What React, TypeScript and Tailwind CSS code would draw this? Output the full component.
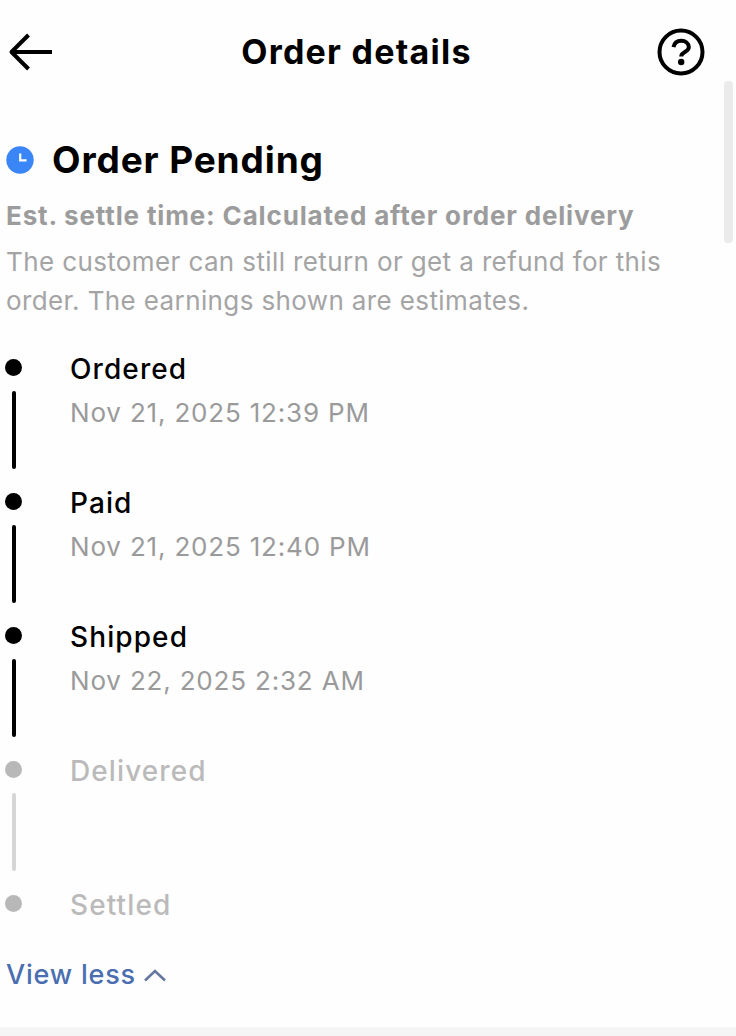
import React, {useState} from "react";

interface OrderStep {
    label: string;
    date?: string;
    done: boolean;
}

const steps: OrderStep[] = [
    {label: "Ordered", date: "Nov 21, 2025 12:39 PM", done: true},
    {label: "Paid", date: "Nov 21, 2025 12:40 PM", done: true},
    {label: "Shipped", date: "Nov 22, 2025 2:32 AM", done: true},
    {label: "Delivered", done: false},
    {label: "Settled", done: false},
];

const BackIcon = () => (
    <svg className="h-10 w-11" viewBox="0 0 44 40" fill="none" stroke="currentColor" strokeWidth="4" strokeLinejoin="round">
        <path d="M20.5 3 3.5 20l17 17M3.5 20H44"/>
    </svg>
);

const HelpIcon = () => (
    <svg className="h-12 w-12" viewBox="0 0 48 48" fill="none" stroke="currentColor" strokeWidth="4">
        <circle cx="24" cy="24" r="21.5"/>
        <path d="M16.5 19.2c.8-4.2 4-6.4 7.7-6.4 4.2 0 7.6 2.6 7.6 6.5 0 5.1-7.6 4.5-7.6 9.2"/>
        <circle cx="24.2" cy="34" r="3.2" fill="currentColor" stroke="none"/>
    </svg>
);

const ClockIcon = () => (
    <svg className="h-7 w-7" viewBox="0 0 28 28" fill="none">
        <circle cx="14" cy="14" r="13.7" fill="#3b86f6"/>
        <path d="M14.2 7.5v6.8h6.3" stroke="#fff" strokeWidth="2.2"/>
    </svg>
);

const TimelineStep = ({step, isLast}: { step: OrderStep; isLast: boolean }) => (
    <li className={`flex ${isLast ? "h-9" : "h-[134px]"}`}>
        <div className="flex w-[15px] flex-col items-center pt-2">
            <span className={`h-[17px] w-[17px] shrink-0 rounded-full ${step.done ? "bg-black" : "bg-[#b9b8b9]"}`}/>
            {!isLast && (
                <span className={`mt-[15px] h-[78px] w-1 shrink-0 rounded-xs ${step.done ? "bg-black" : "bg-[#d6d6d6]"}`}/>
            )}
        </div>
        <div className="ml-[49px]">
            <p className={`text-[28px] leading-9 font-medium tracking-[1.1px] ${step.done ? "text-black" : "text-[#bbbabb]"}`}>
                {step.label}
            </p>
            {step.date && (
                <p className="mt-2 text-[26px] leading-9 tracking-[0.82px] text-[#9a9a9b]">{step.date}</p>
            )}
        </div>
    </li>
);

const App = () => {
    const [expanded, setExpanded] = useState<boolean>(true);
    const visibleSteps = expanded ? steps : steps.slice(0, 1);

    return (
        <div className="relative flex h-[1036px] w-[736px] flex-col overflow-hidden bg-[#fefefe] font-['Inter',sans-serif] text-black">
            <header className="flex h-[104px] items-center justify-between pr-[31px] pl-2">
                <button type="button" aria-label="Back"><BackIcon/></button>
                <h1 className="pb-0.5 pl-1 text-[34px] font-bold tracking-[1.25px]">Order details</h1>
                <button type="button" aria-label="Help"><HelpIcon/></button>
            </header>

            <main className="flex-1 px-1.5">
                <div className="mt-8 flex h-12 items-center">
                    <ClockIcon/>
                    <h2 className="ml-[18px] text-[37px] font-bold tracking-[0.88px]">Order Pending</h2>
                </div>
                <p className="mt-3 text-[26px] leading-10 font-bold tracking-[0.84px] whitespace-nowrap text-[#9c9c9d]">
                    Est. settle time: Calculated after order delivery
                </p>
                <p className="mt-1.5 text-[26px] leading-[39px] tracking-[0.38px] whitespace-nowrap text-[#a4a4a5]">
                    The customer can still return or get a refund for this
                    <br/>
                    order. The earnings shown are estimates.
                </p>

                <ul className="mt-[31px]">
                    {visibleSteps.map((step, index) => (
                        <TimelineStep key={step.label} step={step} isLast={index === visibleSteps.length - 1}/>
                    ))}
                </ul>

                <button
                    type="button"
                    className="mt-[34px] flex items-center text-[27px] leading-9 font-medium tracking-[0.8px] text-[#4a6eb0]"
                    onClick={() => setExpanded((prevState) => !prevState)}
                >
                    {expanded ? "View less" : "View more"}
                    <svg
                        className={`ml-[7px] h-6 w-6 ${expanded ? "" : "rotate-180"}`}
                        viewBox="0 0 24 24"
                        fill="none"
                        stroke="#66779f"
                        strokeWidth="2.6"
                    >
                        <path d="M2 17.5 12 8l10 9.5"/>
                    </svg>
                </button>
            </main>

            <div className="h-[9px] bg-[#f5f5f5]"/>
            <div className="absolute top-[81px] right-[3px] h-[162px] w-[9px] rounded-sm bg-[#ebebeb]"/>
        </div>
    );
};

export default App;
